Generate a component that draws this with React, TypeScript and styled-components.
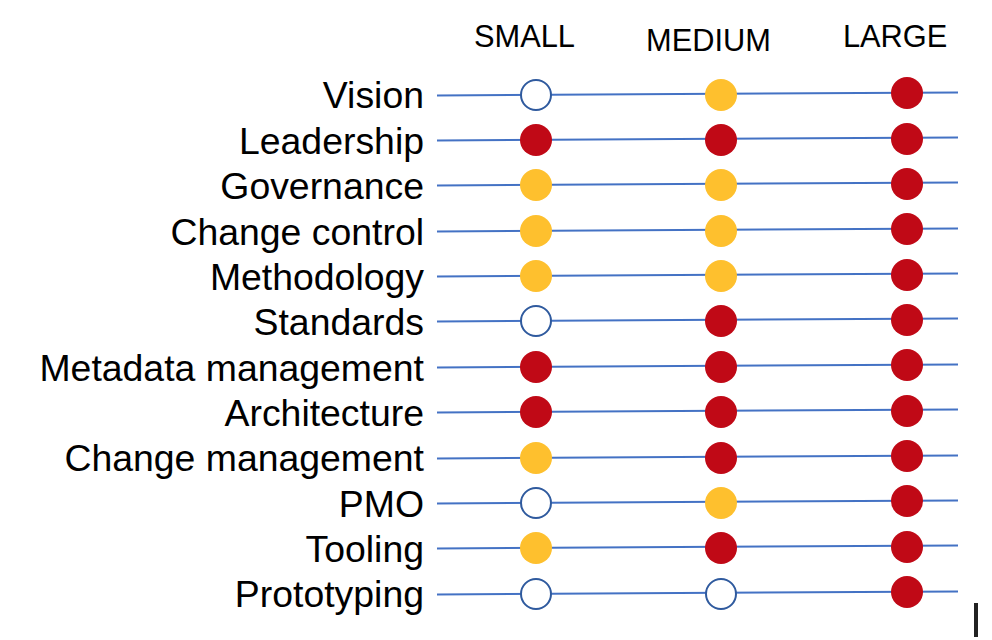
import styled, { createGlobalStyle } from 'styled-components';

type Level = 'none' | 'some' | 'full';

interface Row {
  label: string;
  levels: [Level, Level, Level];
}

const rows: Row[] = [
  { label: 'Vision', levels: ['none', 'some', 'full'] },
  { label: 'Leadership', levels: ['full', 'full', 'full'] },
  { label: 'Governance', levels: ['some', 'some', 'full'] },
  { label: 'Change control', levels: ['some', 'some', 'full'] },
  { label: 'Methodology', levels: ['some', 'some', 'full'] },
  { label: 'Standards', levels: ['none', 'full', 'full'] },
  { label: 'Metadata management', levels: ['full', 'full', 'full'] },
  { label: 'Architecture', levels: ['full', 'full', 'full'] },
  { label: 'Change management', levels: ['some', 'full', 'full'] },
  { label: 'PMO', levels: ['none', 'some', 'full'] },
  { label: 'Tooling', levels: ['some', 'full', 'full'] },
  { label: 'Prototyping', levels: ['none', 'none', 'full'] },
];

const columns = ['SMALL', 'MEDIUM', 'LARGE'];

const GlobalStyle = createGlobalStyle`
  html, body {
    margin: 0;
    padding: 0;
    background: #ffffff;
  }
  body {
    font-family: "Liberation Sans", Arial, Helvetica, sans-serif;
    color: #000000;
  }
`;

export default function App() {
  return (
    <>
      <GlobalStyle />
      <Chart>
        <Header>
          {columns.map((c) => (
            <HeaderCell key={c} $low={c === 'MEDIUM'}>
              {c}
            </HeaderCell>
          ))}
        </Header>
        <Rows>
          {rows.map((row) => (
            <RowLine key={row.label}>
              <Label>{row.label}</Label>
              <Track>
                {row.levels.map((level, i) => (
                  <Dot key={i} $level={level} />
                ))}
              </Track>
            </RowLine>
          ))}
        </Rows>
        <Footer>
          <Cursor />
        </Footer>
      </Chart>
    </>
  );
}

const Chart = styled.div`
  width: 992px;
  height: 640px;
  overflow: hidden;
  display: flex;
  flex-direction: column;
`;

const Header = styled.div`
  flex: none;
  display: flex;
  height: 72px;
  box-sizing: border-box;
  padding: 22px 0 0 474px;
  align-items: flex-start;
  gap: 71px;
`;

const HeaderCell = styled.div<{ $low: boolean }>`
  font-size: 30.8px;
  line-height: 1;
  margin-top: ${(p) => (p.$low ? '4px' : '0')};
  &:last-child {
    margin-left: 1px;
  }
`;

const Rows = styled.div`
  flex: none;
  display: flex;
  flex-direction: column;
`;

const RowLine = styled.div`
  display: grid;
  grid-template-columns: 424px 521px;
  column-gap: 13px;
  height: 45.36px;
  align-items: center;
`;

const Label = styled.div`
  font-size: 37.4px;
  line-height: 1;
  text-align: right;
  white-space: nowrap;
  padding-top: 3px;
`;

const Track = styled.div`
  position: relative;
  display: flex;
  align-items: center;
  height: 100%;
  padding-left: 83px;
  gap: 153px;

  &::before {
    content: '';
    position: absolute;
    left: 0;
    right: 0;
    top: calc(50% - 2px);
    height: 2px;
    background: #4472c4;
    transform: rotate(-0.34deg);
    z-index: 0;
  }
`;

const dotFill: Record<Level, string> = {
  none: '#ffffff',
  some: '#fec02e',
  full: '#c00916',
};

const Dot = styled.span<{ $level: Level }>`
  position: relative;
  z-index: 1;
  flex: none;
  box-sizing: border-box;
  width: 32px;
  height: 32px;
  border-radius: 50%;
  background: ${(p) => dotFill[p.$level]};
  border: ${(p) => (p.$level === 'none' ? '2px solid #2f5a9e' : 'none')};
  &:nth-child(3) {
    margin-left: 1px;
    margin-top: -3px;
  }
`;

const Footer = styled.div`
  flex: none;
  display: flex;
  justify-content: flex-end;
  margin-top: -13px;
  padding-right: 14px;
`;

const Cursor = styled.div`
  width: 4px;
  height: 34px;
  background: #222222;
`;
